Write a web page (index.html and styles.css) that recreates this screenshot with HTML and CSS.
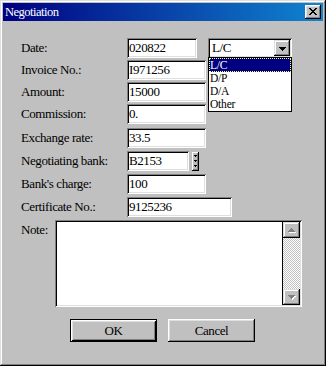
FILE: index.html
```html
<!DOCTYPE html>
<html lang="en">
<head>
<meta charset="utf-8">
<title>Negotiation</title>
<link rel="stylesheet" href="styles.css">
</head>
<body>
<div class="window">
  <div class="titlebar">
    <span class="title">Negotiation</span>
    <div class="close" aria-label="Close">
      <svg width="8" height="7" viewBox="0 0 8 7" shape-rendering="crispEdges"><path fill="#000" d="M0 0h2v1H0zM6 0h2v1H6zM1 1h2v1H1zM5 1h2v1H5zM2 2h4v1H2zM3 3h2v1H3zM2 4h4v1H2zM1 5h2v1H1zM5 5h2v1H5zM0 6h2v1H0zM6 6h2v1H6z"/></svg>
    </div>
  </div>
  <div class="content">
    <div class="form">
      <div class="label">Date:</div>
      <div class="field">
        <div class="edit w-date">020822</div>
        <div class="combo">
          <span class="combo-text">L/C</span>
          <span class="combo-btn">
            <svg width="7" height="4" viewBox="0 0 7 4" shape-rendering="crispEdges"><path fill="#000" d="M0 0h7v1H0zM1 1h5v1H1zM2 2h3v1H2zM3 3h1v1H3z"/></svg>
          </span>
          <div class="listbox">
            <div class="item sel">L/C</div>
            <div class="item">D/P</div>
            <div class="item">D/A</div>
            <div class="item">Other</div>
          </div>
        </div>
      </div>

      <div class="label">Invoice No.:</div>
      <div class="field"><div class="edit w-std">I971256</div></div>

      <div class="label">Amount:</div>
      <div class="field"><div class="edit w-std">15000</div></div>

      <div class="label">Commission:</div>
      <div class="field"><div class="edit w-std">0.</div></div>

      <div class="label">Exchange rate:</div>
      <div class="field"><div class="edit w-std">33.5</div></div>

      <div class="label">Negotiating bank:</div>
      <div class="field">
        <div class="edit w-bank">B2153</div>
        <div class="spinner">
          <svg width="3" height="13" viewBox="0 0 3 13" shape-rendering="crispEdges"><path fill="#000" d="M0 0h3v1H0zM1 1h1v1H1zM0 5h3v1H0zM1 6h1v1H1zM0 10h3v1H0zM1 11h1v1H1z"/></svg>
        </div>
      </div>

      <div class="label">Bank's charge:</div>
      <div class="field"><div class="edit w-std">100</div></div>

      <div class="label">Certificate No.:</div>
      <div class="field"><div class="edit w-cert">9125236</div></div>
    </div>

    <div class="note-row">
      <div class="label note-label">Note:</div>
      <div class="memo">
        <div class="vscroll">
          <div class="sbtn">
            <svg width="8" height="5" viewBox="0 0 8 5" shape-rendering="crispEdges"><path fill="#fff" d="M4 1h1v1H4zM3 2h3v1H3zM2 3h5v1H2zM1 4h7v1H1z"/><path fill="#808080" d="M3 0h1v1H3zM2 1h3v1H2zM1 2h5v1H1zM0 3h7v1H0z"/></svg>
          </div>
          <div class="sbtn">
            <svg width="8" height="5" viewBox="0 0 8 5" shape-rendering="crispEdges"><path fill="#fff" d="M1 1h7v1H1zM2 2h5v1H2zM3 3h3v1H3zM4 4h1v1H4z"/><path fill="#808080" d="M0 0h7v1H0zM1 1h5v1H1zM2 2h3v1H2zM3 3h1v1H3z"/></svg>
          </div>
        </div>
      </div>
    </div>

    <div class="buttons">
      <div class="btn default">OK</div>
      <div class="btn">Cancel</div>
    </div>
  </div>
</div>
</body>
</html>
```

FILE: styles.css
```css
* {
  box-sizing: border-box;
  margin: 0;
  padding: 0;
}

html,
body {
  width: 326px;
  height: 366px;
  overflow: hidden;
}

body {
  font-family: "Liberation Serif", "Times New Roman", serif;
  font-size: 13px;
  letter-spacing: -0.4px;
  color: #000;
  background: #c0c0c0;
}

.window {
  width: 326px;
  height: 366px;
  padding: 3px;
  background: #c0c0c0;
  box-shadow: inset -1px -1px #000, inset 1px 1px #dfdfdf,
    inset -2px -2px #808080, inset 2px 2px #fff;
}

.titlebar {
  height: 18px;
  padding: 0 2px;
  display: flex;
  align-items: center;
  justify-content: space-between;
  background: linear-gradient(to right, #000080, #1084d0);
}

.title {
  color: #fff;
  font-size: 12.5px;
  letter-spacing: -0.5px;
  line-height: 18px;
}

.close {
  width: 16px;
  height: 14px;
  padding: 3px 0 0 4px;
  display: flex;
  align-items: flex-start;
  background: #c0c0c0;
  box-shadow: inset -1px -1px #000, inset 1px 1px #fff,
    inset -2px -2px #808080, inset 2px 2px #dfdfdf;
}

.close svg,
.combo-btn svg,
.sbtn svg,
.spinner svg {
  display: block;
}

.content {
  padding: 17px 0 0 18px;
}

.form {
  display: grid;
  grid-template-columns: 106px auto;
  grid-template-rows: 22px 22px 22px 24px 23px 23px 23px 23px;
}

.label {
  height: 20px;
  line-height: 20px;
  white-space: nowrap;
}

.field {
  display: flex;
  align-items: flex-start;
  height: 20px;
}

.edit {
  height: 20px;
  padding: 0 2px;
  line-height: 20px;
  background: #fff;
  white-space: nowrap;
  box-shadow: inset 1px 1px #808080, inset -1px -1px #fff,
    inset 2px 2px #000, inset -2px -2px #dfdfdf;
}

.w-date { width: 70px; }
.w-std { width: 79px; }
.w-bank { width: 62px; }
.w-cert { width: 105px; }

.combo {
  position: relative;
  width: 84px;
  height: 20px;
  margin-left: 11px;
  padding: 2px;
  display: flex;
  align-items: center;
  background: #fff;
  box-shadow: inset 1px 1px #808080, inset -1px -1px #fff,
    inset 2px 2px #000, inset -2px -2px #dfdfdf;
}

.combo-text {
  flex: 1;
  padding-left: 2px;
  line-height: 16px;
}

.combo-btn {
  width: 16px;
  height: 16px;
  display: flex;
  align-items: center;
  justify-content: center;
  padding-top: 1px;
  background: #c0c0c0;
  box-shadow: inset -1px -1px #000, inset 1px 1px #dfdfdf,
    inset -2px -2px #808080, inset 2px 2px #fff;
}

.listbox {
  position: absolute;
  left: 0;
  top: 19px;
  width: 84px;
  border: 1px solid #000;
  background: #fff;
  z-index: 2;
}

.item {
  height: 13px;
  font-size: 11.5px;
  letter-spacing: -0.2px;
  line-height: 11px;
  border: 1px solid transparent;
  white-space: nowrap;
}

.item.sel {
  height: 14px;
  line-height: 12px;
  background: #000080;
  color: #fff;
  border: 1px dotted #ffff80;
}

.spinner {
  width: 7px;
  height: 19px;
  margin: 1px 0 0 3px;
  padding: 3px 0 0 2px;
  background: #c0c0c0;
  box-shadow: inset -1px -1px #000, inset 1px 1px #fff,
    inset -2px -2px #808080;
}

.note-row {
  display: flex;
  align-items: flex-start;
}

.note-label {
  width: 34px;
}

.memo {
  width: 247px;
  height: 87px;
  padding: 2px;
  display: flex;
  justify-content: flex-end;
  background: #fff;
  box-shadow: inset 1px 1px #808080, inset -1px -1px #fff,
    inset 2px 2px #000, inset -2px -2px #dfdfdf;
}

.vscroll {
  width: 18px;
  height: 100%;
  border-left: 1px solid #000;
  display: flex;
  flex-direction: column;
  justify-content: space-between;
  background: repeating-conic-gradient(#c0c0c0 0 25%, #fff 0 50%) 0 0 / 2px 2px;
}

.sbtn {
  width: 17px;
  height: 16px;
  display: flex;
  align-items: center;
  justify-content: center;
  background: #c0c0c0;
  box-shadow: inset -1px -1px #000, inset 1px 1px #dfdfdf,
    inset -2px -2px #808080, inset 2px 2px #fff;
}

.buttons {
  display: flex;
  gap: 11px;
  margin: 12px 0 0 49px;
}

.btn {
  width: 87px;
  height: 23px;
  line-height: 23px;
  text-align: center;
  background: #c0c0c0;
  box-shadow: inset -1px -1px #000, inset 1px 1px #fff,
    inset -2px -2px #808080, inset 2px 2px #dfdfdf;
}

.btn.default {
  box-shadow: inset 1px 1px #000, inset -1px -1px #000,
    inset 2px 2px #fff, inset -2px -2px #000,
    inset 3px 3px #dfdfdf, inset -3px -3px #808080;
}
```
